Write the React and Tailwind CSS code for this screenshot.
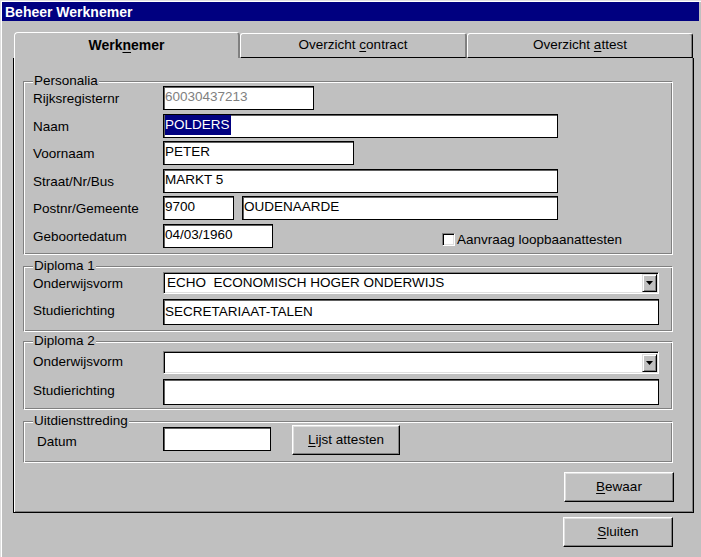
import React from 'react'

const U = ({ children }) => <span className="underline underline-offset-[2px]">{children}</span>

function Btn({ children, className = '' }) {
  return (
    <button
      className={`flex items-center justify-center bg-[#c0c0c0] border border-t-white border-l-white border-b-black border-r-black shadow-[inset_-1px_-1px_0_#808080,inset_1px_1px_0_#dfdfdf] text-[13.5px] text-black ${className}`}
    >
      {children}
    </button>
  )
}

function Edit({ w, h = 'h-[24px]', className = '', children }) {
  return (
    <div
      className={`${w} ${h} flex items-center bg-white border border-black shadow-[inset_1px_1px_0_#606060] pl-[1px] pb-[1px] whitespace-pre overflow-hidden text-black ${className}`}
    >
      {children}
    </div>
  )
}

function Combo({ h, text }) {
  return (
    <div
      className={`w-[496px] ${h} flex items-center bg-white border border-t-[#808080] border-l-[#808080] border-b-white border-r-white shadow-[inset_1px_1px_0_#000,inset_-1px_-1px_0_#dfdfdf] pl-[3px] pr-[1px]`}
    >
      <span className="flex-1 whitespace-pre text-black">{text}</span>
      <div className="w-[15px] h-[18px] flex items-center justify-center bg-[#c0c0c0] border border-t-[#dfdfdf] border-l-[#dfdfdf] border-b-black border-r-black shadow-[inset_1px_1px_0_#fff,inset_-1px_-1px_0_#808080]">
        <svg width="7" height="4" viewBox="0 0 7 4">
          <polygon points="0,0 7,0 3.5,4" fill="#000" />
        </svg>
      </div>
    </div>
  )
}

function Group({ title, className = '', children }) {
  return (
    <div
      className={`relative w-[650px] border border-t-[#808080] border-l-[#808080] border-b-white border-r-white shadow-[inset_1px_1px_0_#fff,inset_-1px_-1px_0_#808080] ${className}`}
    >
      <span className="absolute -top-[9px] left-[9px] bg-[#c0c0c0] px-[1px] leading-[16px]">{title}</span>
      {children}
    </div>
  )
}

function Row({ label, children, className = '', labelClass = 'pt-[3px]' }) {
  return (
    <div className={`flex items-center pl-[9px] ${className}`}>
      <span className={`w-[130px] ${labelClass}`}>{label}</span>
      {children}
    </div>
  )
}

export default function App() {
  return (
    <div className="w-[701px] h-[557px] bg-[#c0c0c0] p-[2px] shadow-[inset_1px_1px_0_#dfdfdf,inset_2px_2px_0_#fff] font-['Liberation_Sans',Arial,sans-serif] text-[13.5px] text-black flex flex-col overflow-hidden">
      {/* title bar */}
      <div className="h-[19px] bg-[#000080] flex items-center pl-[3px]">
        <span className="text-white font-bold text-[14px] leading-none">Beheer Werknemer</span>
      </div>

      {/* tabs */}
      <div className="mt-[11px] ml-[12px] flex items-end h-[26px]">
        <div className="w-[226px] h-[26px] flex items-center justify-center border-t border-l border-white border-r-2 border-r-[#808080] rounded-tl-[4px] rounded-tr-[4px] font-bold text-[14px]">
          <span>
            Werk<U>n</U>emer
          </span>
        </div>
        <div className="w-[227px] h-[25px] flex items-center justify-center border-t border-l border-white border-r-2 border-r-[#808080] border-b border-b-black rounded-tl-[3px] rounded-tr-[3px] text-[13.5px]">
          <span>
            Overzicht <U>c</U>ontract
          </span>
        </div>
        <div className="w-[226px] h-[25px] flex items-center justify-center border-t border-l border-white border-r border-r-black border-b border-b-black shadow-[inset_-1px_0_0_#808080] rounded-tl-[3px] rounded-tr-[3px] text-[13.5px]">
          <span>
            Overzicht <U>a</U>ttest
          </span>
        </div>
      </div>

      {/* panel */}
      <div className="ml-[11px] w-[681px] h-[455px] border-l border-r border-b border-black shadow-[inset_1px_0_0_#fff,inset_-1px_-1px_0_#808080] pl-[9px] pr-[19px] flex flex-col">
        <Group title="Personalia" className="mt-[23px] h-[174px] pt-[4px]">
          <div className="flex flex-col gap-[3.5px]">
            <Row label="Rijksregisternr">
              <Edit w="w-[151px]">
                <span className="text-[#808080]">60030437213</span>
              </Edit>
            </Row>
            <Row label="Naam">
              <Edit w="w-[395px]">
                <span className="bg-[#000080] text-white leading-[20px] pr-[1px]">POLDERS</span>
              </Edit>
            </Row>
            <Row label="Voornaam">
              <Edit w="w-[191px]">PETER</Edit>
            </Row>
            <Row label="Straat/Nr/Bus">
              <Edit w="w-[395px]">MARKT 5</Edit>
            </Row>
            <Row label="Postnr/Gemeente">
              <Edit w="w-[71px]">9700</Edit>
              <Edit w="w-[316px]" className="ml-[8px]">
                OUDENAARDE
              </Edit>
            </Row>
            <Row label="Geboortedatum">
              <Edit w="w-[110px]">04/03/1960</Edit>
              <div className="ml-[169px] self-end mb-[1px] h-[15px] flex items-center">
                <div className="w-[13px] h-[13px] bg-white border border-t-[#808080] border-l-[#808080] border-b-white border-r-white shadow-[inset_1px_1px_0_#000,inset_-1px_-1px_0_#dfdfdf]" />
                <span className="ml-[2px] leading-[15px]">Aanvraag loopbaanattesten</span>
              </div>
            </Row>
          </div>
        </Group>

        <Group title="Diploma 1" className="mt-[11px] h-[66px] pt-[5px]">
          <Row label="Onderwijsvorm" labelClass="pt-[2px]">
            <Combo h="h-[22px]" text="ECHO  ECONOMISCH HOGER ONDERWIJS" />
          </Row>
          <Row label="Studierichting" className="mt-[5px]" labelClass="pb-[2px]">
            <Edit w="w-[496px]" h="h-[26px]">
              SECRETARIAAT-TALEN
            </Edit>
          </Row>
        </Group>

        <Group title="Diploma 2" className="mt-[9px] h-[69px] pt-[9px]">
          <Row label="Onderwijsvorm" labelClass="pt-0">
            <Combo h="h-[23px]" text="" />
          </Row>
          <Row label="Studierichting" className="mt-[5px]" labelClass="pb-[2px]">
            <Edit w="w-[496px]" h="h-[26px]"> </Edit>
          </Row>
        </Group>

        <Group title="Uitdiensttreding" className="mt-[11px] h-[42px] pt-[3px]">
          <div className="flex items-start pl-[13px]">
            <span className="w-[126px] mt-[9px] leading-[16px]">Datum</span>
            <Edit w="w-[108px]" className="mt-[2px]"> </Edit>
            <Btn className="ml-[21px] w-[108px] h-[30px]">
              <span>
                <U>L</U>ijst attesten
              </span>
            </Btn>
          </div>
        </Group>

        <Btn className="mt-[9px] self-end w-[110px] h-[30px]">
          <span>
            <U>B</U>ewaar
          </span>
        </Btn>
      </div>

      <Btn className="mt-[4px] self-end mr-[26px] w-[110px] h-[30px]">
        <span>
          <U>S</U>luiten
        </span>
      </Btn>
    </div>
  )
}
